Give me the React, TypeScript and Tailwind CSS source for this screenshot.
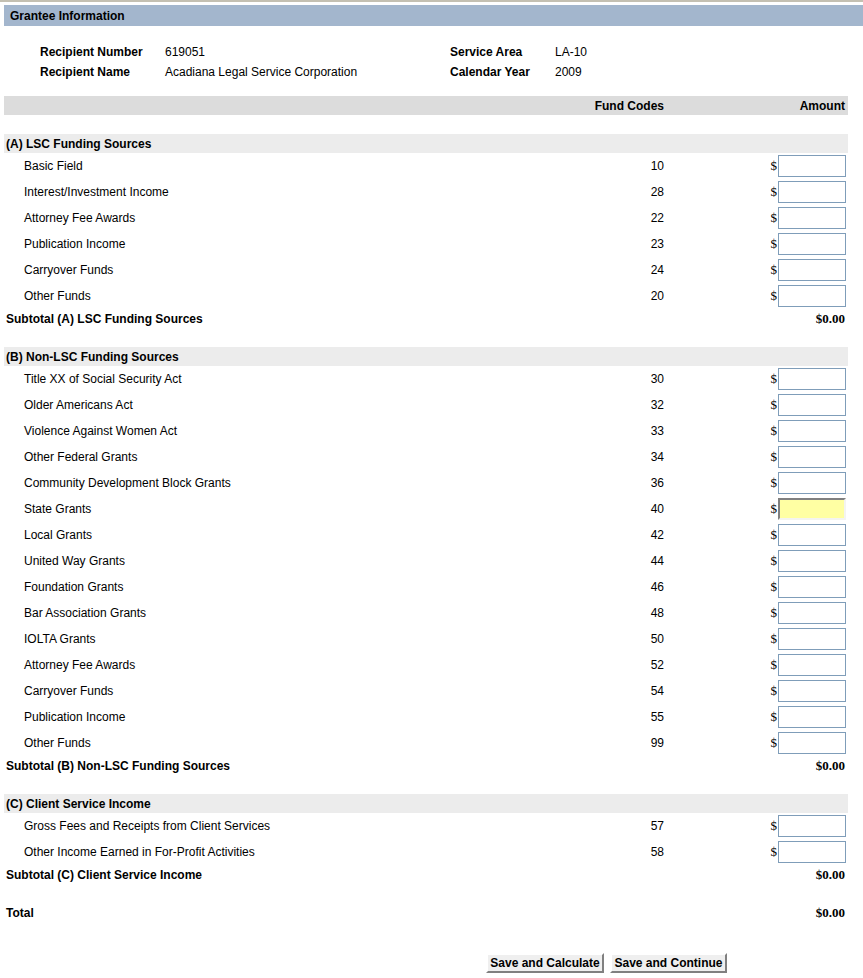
import React from 'react';

type Item = { label: string; code: string; highlight?: boolean };

const lscItems: Item[] = [
  { label: 'Basic Field', code: '10' },
  { label: 'Interest/Investment Income', code: '28' },
  { label: 'Attorney Fee Awards', code: '22' },
  { label: 'Publication Income', code: '23' },
  { label: 'Carryover Funds', code: '24' },
  { label: 'Other Funds', code: '20' },
];

const nonLscItems: Item[] = [
  { label: 'Title XX of Social Security Act', code: '30' },
  { label: 'Older Americans Act', code: '32' },
  { label: 'Violence Against Women Act', code: '33' },
  { label: 'Other Federal Grants', code: '34' },
  { label: 'Community Development Block Grants', code: '36' },
  { label: 'State Grants', code: '40', highlight: true },
  { label: 'Local Grants', code: '42' },
  { label: 'United Way Grants', code: '44' },
  { label: 'Foundation Grants', code: '46' },
  { label: 'Bar Association Grants', code: '48' },
  { label: 'IOLTA Grants', code: '50' },
  { label: 'Attorney Fee Awards', code: '52' },
  { label: 'Carryover Funds', code: '54' },
  { label: 'Publication Income', code: '55' },
  { label: 'Other Funds', code: '99' },
];

const clientItems: Item[] = [
  { label: 'Gross Fees and Receipts from Client Services', code: '57' },
  { label: 'Other Income Earned in For-Profit Activities', code: '58' },
];

function SectionHeader({ title }: { title: string }) {
  return (
    <div className="h-[19px] bg-[#ececec] flex items-center pl-[2px] font-bold">{title}</div>
  );
}

function ItemRow({ item }: { item: Item }) {
  return (
    <div className="h-[26px] flex items-center">
      <div className="flex-1 pl-[20px]">{item.label}</div>
      <div className="w-[80px] text-right">{item.code}</div>
      <div className="w-[184px] flex items-center justify-end pr-[2px]">
        <span className="font-['Liberation_Serif',serif] text-[13px] mr-[1px]">$</span>
        {item.highlight ? (
          <input
            type="text"
            className="w-[68px] h-[22px] bg-[#ffffa3] border-2 border-t-[#808080] border-l-[#808080] border-b-[#f4f4f0] border-r-[#f4f4f0] outline-none"
          />
        ) : (
          <input type="text" className="w-[68px] h-[22px] bg-white border border-[#7f9db9] outline-none" />
        )}
      </div>
    </div>
  );
}

function TotalRow({ label }: { label: string }) {
  return (
    <div className="h-[20px] flex items-center">
      <div className="flex-1 pl-[2px] font-bold">{label}</div>
      <div className="pr-[3px] font-['Liberation_Serif',serif] font-bold text-[13px]">$0.00</div>
    </div>
  );
}

function Section({ title, items, subtotal }: { title: string; items: Item[]; subtotal: string }) {
  return (
    <div>
      <SectionHeader title={title} />
      {items.map((it) => (
        <ItemRow key={it.label + it.code} item={it} />
      ))}
      <TotalRow label={subtotal} />
    </div>
  );
}

export default function App() {
  return (
    <div className="min-h-screen bg-white text-black text-[12px] font-['Liberation_Sans',Arial,sans-serif] border-t-2 border-[#c4c0b2]">
      {/* Title bar */}
      <div className="mt-[3px] ml-[4px] h-[21px] bg-[#a3b6cd] flex items-center pl-[6px] font-bold">
        Grantee Information
      </div>

      {/* Grantee details */}
      <div className="pt-[19px] pl-[40px] flex flex-col gap-[6px]">
        <div className="flex h-[14px] items-center">
          <span className="w-[125px] font-bold">Recipient Number</span>
          <span className="w-[285px]">619051</span>
          <span className="w-[105px] font-bold">Service Area</span>
          <span>LA-10</span>
        </div>
        <div className="flex h-[14px] items-center">
          <span className="w-[125px] font-bold">Recipient Name</span>
          <span className="w-[285px]">Acadiana Legal Service Corporation</span>
          <span className="w-[105px] font-bold">Calendar Year</span>
          <span>2009</span>
        </div>
      </div>

      <div className="ml-[4px] w-[844px]">
        {/* Column header */}
        <div className="mt-[17px] h-[19px] bg-[#dcdcdc] flex items-center font-bold">
          <div className="flex-1" />
          <div className="text-right">Fund Codes</div>
          <div className="w-[184px] text-right pr-[3px]">Amount</div>
        </div>

        <div className="mt-[19px] flex flex-col gap-[18px]">
          <Section title="(A) LSC Funding Sources" items={lscItems} subtotal="Subtotal (A) LSC Funding Sources" />
          <Section
            title="(B) Non-LSC Funding Sources"
            items={nonLscItems}
            subtotal="Subtotal (B) Non-LSC Funding Sources"
          />
          <Section title="(C) Client Service Income" items={clientItems} subtotal="Subtotal (C) Client Service Income" />
          <TotalRow label="Total" />
        </div>

        {/* Buttons */}
        <div className="mt-[30px] flex gap-[6px] pl-[482px]">
          <button className="w-[118px] h-[20px] bg-[#efefef] border-2 border-t-[#ffffff] border-l-[#ffffff] border-b-[#808080] border-r-[#808080] font-bold text-[12px] leading-none">
            Save and Calculate
          </button>
          <button className="w-[117px] h-[20px] bg-[#efefef] border-2 border-t-[#ffffff] border-l-[#ffffff] border-b-[#808080] border-r-[#808080] font-bold text-[12px] leading-none">
            Save and Continue
          </button>
        </div>
      </div>
    </div>
  );
}
